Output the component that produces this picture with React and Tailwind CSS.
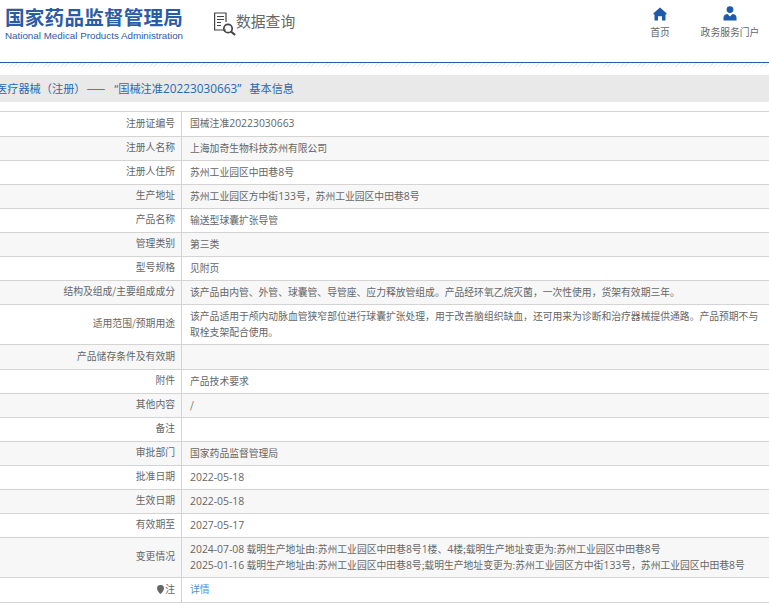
const rows = [
  { h: "h-[25px]", label: "注册证编号", value: "国械注准20223030663" },
  { h: "h-[24px]", label: "注册人名称", value: "上海加奇生物科技苏州有限公司" },
  { h: "h-[24px]", label: "注册人住所", value: "苏州工业园区中田巷8号" },
  { h: "h-[24px]", label: "生产地址", value: "苏州工业园区方中街133号，苏州工业园区中田巷8号" },
  { h: "h-[24px]", label: "产品名称", value: "输送型球囊扩张导管" },
  { h: "h-[24px]", label: "管理类别", value: "第三类" },
  { h: "h-[24px]", label: "型号规格", value: "见附页" },
  { h: "h-[24px]", label: "结构及组成/主要组成成分", value: "该产品由内管、外管、球囊管、导管座、应力释放管组成。产品经环氧乙烷灭菌，一次性使用，货架有效期三年。" },
  { h: "h-[40px]", label: "适用范围/预期用途", value: "该产品适用于颅内动脉血管狭窄部位进行球囊扩张处理，用于改善脑组织缺血，还可用来为诊断和治疗器械提供通路。产品预期不与取栓支架配合使用。" },
  { h: "h-[25px]", label: "产品储存条件及有效期", value: "" },
  { h: "h-[24px]", label: "附件", value: "产品技术要求" },
  { h: "h-[24px]", label: "其他内容", value: "/" },
  { h: "h-[24px]", label: "备注", value: "" },
  { h: "h-[24px]", label: "审批部门", value: "国家药品监督管理局" },
  { h: "h-[24px]", label: "批准日期", value: "2022-05-18" },
  { h: "h-[24px]", label: "生效日期", value: "2022-05-18" },
  { h: "h-[24px]", label: "有效期至", value: "2027-05-17" },
  { h: "h-[40px]", label: "变更情况", value: "2024-07-08 载明生产地址由:苏州工业园区中田巷8号1楼、4楼;载明生产地址变更为:苏州工业园区中田巷8号\n2025-01-16 载明生产地址由:苏州工业园区中田巷8号;载明生产地址变更为:苏州工业园区方中街133号，苏州工业园区中田巷8号" },
];

function Digits({ text }) {
  return text.split(/(\d[\d-]*)/).map((part, i) =>
    i % 2 === 1 ? (
      <span key={i} className="text-[10.4px] font-['Open_Sans',sans-serif]">{part}</span>
    ) : (
      part
    )
  );
}

function Row({ h, label, value, striped }) {
  return (
    <div className={`flex ${h} border-b border-[#d4d4d4] ${striped ? "bg-[#f7f7f7]" : "bg-white"}`}>
      <div className="w-[182px] shrink-0 flex items-center justify-end pr-[6px] pb-[2px] border-r border-[#d4d4d4] text-[#666]">{label}</div>
      <div className="flex-1 pl-[8px] pr-[10px] pb-[2px] flex items-center leading-[16px] text-[#666]">
        <div className="whitespace-pre-line"><Digits text={value} /></div>
      </div>
    </div>
  );
}

export default function App() {
  return (
    <div className="w-[769px] h-[611px] overflow-hidden bg-white text-[9.8px] font-['Noto_Sans_CJK_SC','Liberation_Sans',sans-serif]">
      <header className="h-[63px] flex border-b border-[#1f5fa8]">
        <div className="w-[214px] pl-[5px] pt-[5px] shrink-0">
          <div className="text-[19.6px] leading-[24px] font-bold text-[#2a5ca6] whitespace-nowrap tracking-[0.2px]">国家药品监督管理局</div>
          <div className="text-[9.8px] leading-[12px] mt-[1px] text-[#2a5ca6] whitespace-nowrap font-['Liberation_Sans',sans-serif]">National Medical Products Administration</div>
        </div>
        <div className="flex items-start pt-[12px]">
          <svg width="24" height="24" viewBox="0 0 24 24" fill="none" stroke="#444" strokeWidth="1.2">
            <path d="M12 18H0.6V1H12V10" />
            <path d="M3 4.5h7M3 7.5h7M3 10.5h4M3 13.5h4" />
            <circle cx="14" cy="16.5" r="4.2" strokeWidth="1.7" />
            <path d="M17 19.5L21 23" strokeWidth="2.2" />
          </svg>
          <span className="text-[14.8px] leading-[20px] text-[#666] ml-[-2px] mt-[-1px]">数据查询</span>
        </div>
        <div className="ml-auto flex">
          <div className="w-[50px] flex flex-col items-center pt-[7px] mr-[6px]">
            <svg width="14" height="14" viewBox="0 0 14 14" fill="#1d5bab">
              <path d="M7 0.5L0.5 6.2V7.5H1.5V13.5H5V9.2H9V13.5H12.5V7.5H13.5V6.2Z" />
            </svg>
            <span className="mt-[3px] leading-[16px] text-[#666]">首页</span>
          </div>
          <div className="w-[78px] flex flex-col items-center pt-[6px]">
            <svg width="14" height="15" viewBox="0 0 14 15" fill="#1d5bab">
              <circle cx="7" cy="3.6" r="3.4" />
              <path d="M0.5 14.5V11.5C0.5 9.5 2.5 8 4.5 8L7 10.5L9.5 8C11.5 8 13.5 9.5 13.5 11.5V14.5Z" />
            </svg>
            <span className="mt-[3px] leading-[16px] text-[#666] whitespace-nowrap">政务服务门户</span>
          </div>
        </div>
      </header>
      <div className="h-[4px] bg-[repeating-linear-gradient(135deg,#eeeeee_0,#eeeeee_1px,#ffffff_1px,#ffffff_3px)]" />
      <div className="h-[8px] bg-white" />
      <div className="h-[27px] bg-[#e9e9e9] flex items-center overflow-hidden whitespace-nowrap text-[11.2px] text-[#2a68b0]">
        <span className="ml-[-4px]">
          医疗器械（注册）
          <span className="ml-[1px] mr-[8px] tracking-[1px]">——</span>
          <span className="font-['Open_Sans',sans-serif]">“</span>
          国械注准
          <span className="text-[11.8px] font-['Open_Sans',sans-serif]">20223030663”</span>
          <span className="ml-[8px]">基本信息</span>
        </span>
      </div>
      <div className="mt-[9px] border-t border-[#d4d4d4]">
        {rows.map((r, i) => (
          <Row key={r.label} {...r} striped={i % 2 === 1} />
        ))}
        <div className="flex h-[25px] border-b border-[#d4d4d4] bg-white">
          <div className="w-[182px] shrink-0 flex items-center justify-end pr-[6px] pb-[2px] border-r border-[#d4d4d4] text-[#666]">
            <svg width="7" height="9" viewBox="0 0 7 9" fill="#666" className="mr-[1px]">
              <path d="M3.5 0A3.4 3.4 0 0 0 0 3.4C0 5.6 3.5 9 3.5 9S7 5.6 7 3.4A3.4 3.4 0 0 0 3.5 0Z" />
            </svg>
            注
          </div>
          <div className="flex-1 flex items-center pl-[8px] pb-[2px] text-[#4a90e2]">详情</div>
        </div>
      </div>
    </div>
  );
}
